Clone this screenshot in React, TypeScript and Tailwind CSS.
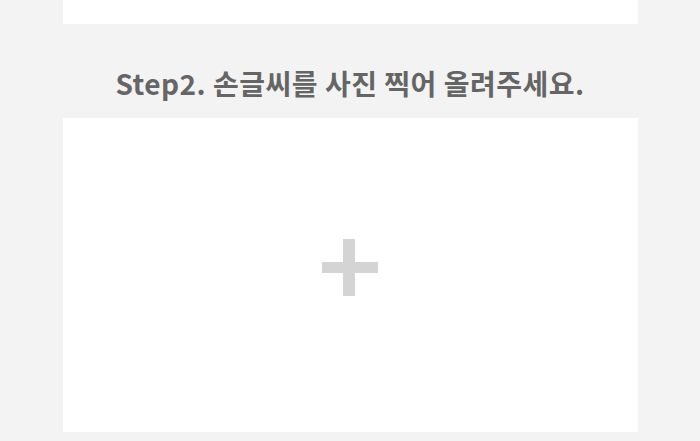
import React from 'react';

const App: React.FC = () => {
  return (
    <div className="min-h-screen w-full bg-[#f3f3f3] font-['Noto_Sans_CJK_KR','Noto_Sans',sans-serif]">
      <div className="mx-auto w-[575px]">
        <div className="h-[24px] bg-white" />

        <h2 className="h-[94px] pt-[40px] text-center text-[28px] font-bold leading-[38px] tracking-[0.5px] text-[#656565]">
          Step2. 손글씨를 사진 찍어 올려주세요.
        </h2>

        <button className="flex h-[314px] w-full items-center justify-center bg-white pb-[15px]">
          <svg width="56" height="57" viewBox="0 0 56 57" fill="#d4d4d4">
            <rect x="21" y="0" width="12" height="57" />
            <rect x="0" y="23" width="56" height="11" />
          </svg>
        </button>
      </div>
    </div>
  );
};

export default App;
